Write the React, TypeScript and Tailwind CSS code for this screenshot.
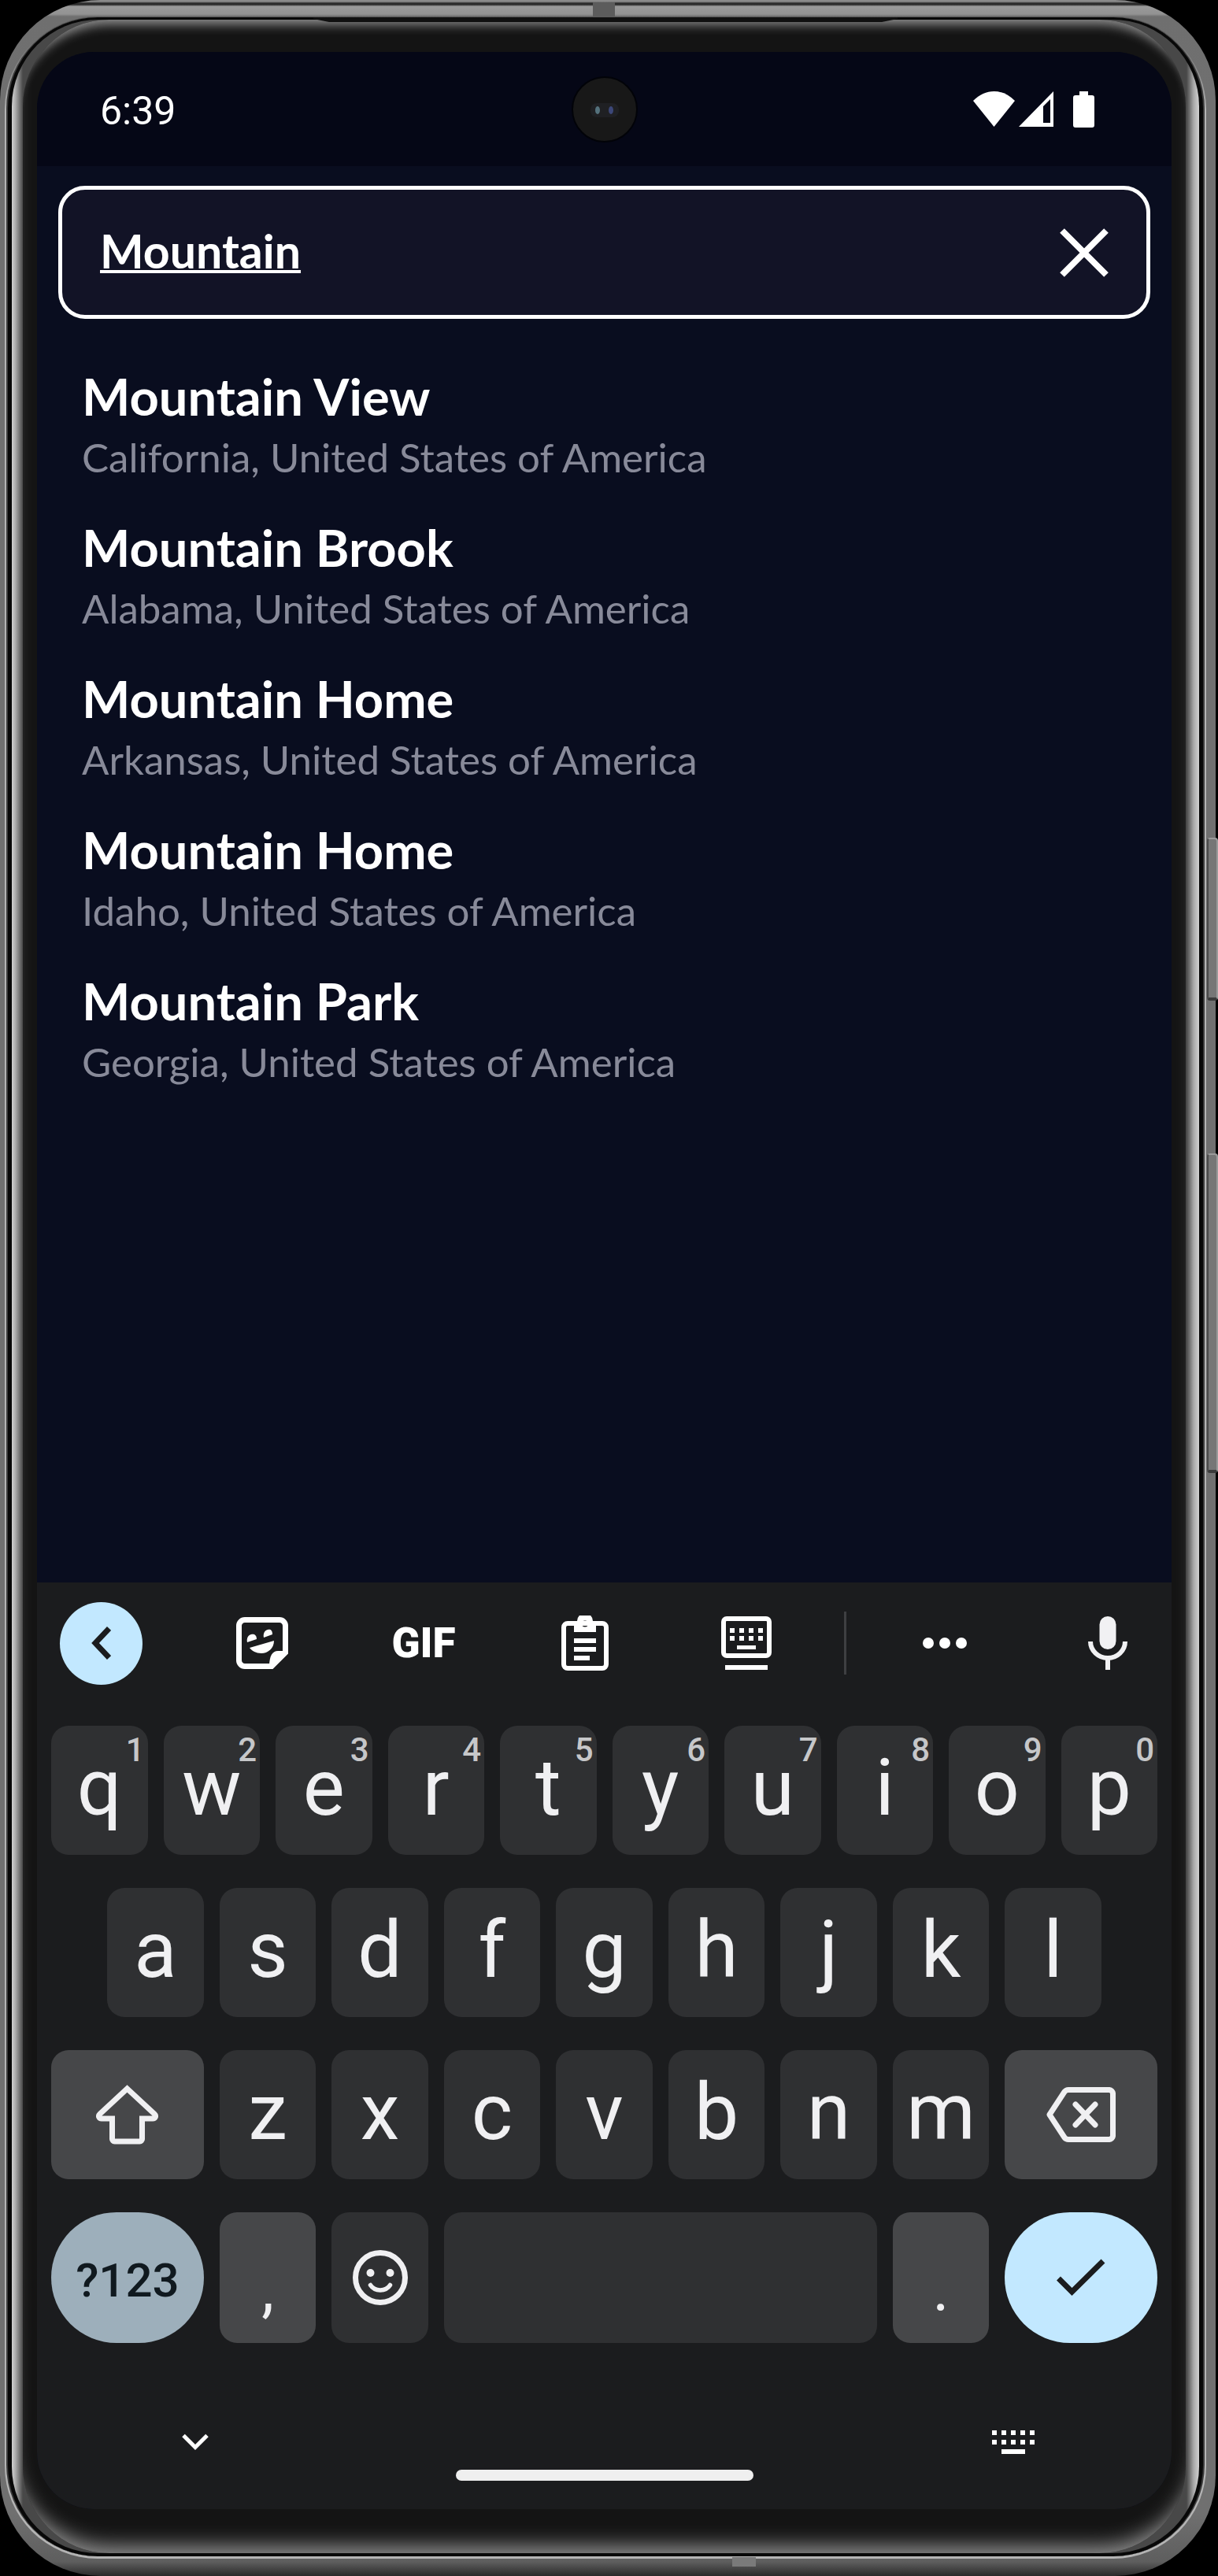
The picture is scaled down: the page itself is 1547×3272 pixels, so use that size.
import { useState } from 'react';
import type { ReactNode } from 'react';

const results = [
  { name: 'Mountain View', region: 'California, United States of America' },
  { name: 'Mountain Brook', region: 'Alabama, United States of America' },
  { name: 'Mountain Home', region: 'Arkansas, United States of America' },
  { name: 'Mountain Home', region: 'Idaho, United States of America' },
  { name: 'Mountain Park', region: 'Georgia, United States of America' },
];

const topRow = ['q', 'w', 'e', 'r', 't', 'y', 'u', 'i', 'o', 'p'];
const middleRow = ['a', 's', 'd', 'f', 'g', 'h', 'j', 'k', 'l'];
const bottomRow = ['z', 'x', 'c', 'v', 'b', 'n', 'm'];

function StatusBar() {
  return (
    <header className="relative flex h-[145px] items-center justify-between bg-[#050716] pr-[98px] pl-20">
      <time className="pt-1 text-[50px] leading-none text-white">6:39</time>
      <Camera />
      <div className="flex items-center text-white">
        <svg width="53" height="45" viewBox="0 0 53 45" fill="currentColor" aria-label="Wi-Fi">
          <path d="M0 12 C8 4 17 0 26.500 0 C36 0 45 4 53 12 L26.500 45 Z" />
        </svg>
        <svg className="ml-[5px]" width="44" height="45" viewBox="0 0 44 45" fill="currentColor" aria-label="Signal">
          <path fillRule="evenodd" d="M0 45 L44 0 V45 Z M31 19 V40 H40 V10 Z" />
        </svg>
        <svg className="ml-[25px]" width="27" height="46" viewBox="0 0 27 46" fill="currentColor" aria-label="Battery">
          <path d="M8 0 H19 V5 H24 a3 3 0 0 1 3 3 V43 a3 3 0 0 1 -3 3 H3 a3 3 0 0 1 -3 -3 V8 a3 3 0 0 1 3 -3 H8 Z" />
        </svg>
      </div>
    </header>
  );
}

function Camera() {
  return (
    <svg
      className="absolute top-1/2 left-1/2 -translate-x-1/2 -translate-y-1/2"
      width="84"
      height="84"
      viewBox="0 0 84 84"
      aria-hidden="true"
    >
      <circle cx="42" cy="42" r="41" fill="#181818" stroke="#020308" strokeWidth="2" />
      <rect x="24" y="34" width="36" height="18" rx="8" fill="#1f2023" />
      <ellipse cx="33" cy="43" rx="3" ry="5" fill="#54717c" />
      <ellipse cx="50" cy="43" rx="3" ry="5" fill="#3c4778" />
    </svg>
  );
}

function SearchBox() {
  const [query, setQuery] = useState('Mountain');
  return (
    <div className="mx-[27px] mt-[25px] flex h-[169px] items-center rounded-[34px] border-[5px] border-white bg-[#121326] pr-12 pl-12">
      <input
        aria-label="Search city"
        className="min-w-0 flex-1 bg-transparent pb-1 font-['Lato',sans-serif] text-[59px] leading-[76px] font-bold text-white underline decoration-4 underline-offset-2 outline-none [text-decoration-skip-ink:none]"
        value={query}
        onChange={(e) => setQuery(e.target.value)}
      />
      <button type="button" aria-label="Clear" className="text-white" onClick={() => setQuery('')}>
        <svg width="62" height="62" viewBox="0 0 62 62" fill="none" stroke="currentColor" strokeWidth="8">
          <path d="M3 3 L59 59 M59 3 L3 59" />
        </svg>
      </button>
    </div>
  );
}

function Results() {
  return (
    <ul className="mt-14 flex flex-1 flex-col gap-9 px-[57px] font-['Lato',sans-serif]">
      {results.map((r, i) => (
        <li key={i}>
          <a href="#" className="block">
            <div className="text-[65px] leading-[84px] font-bold text-white">{r.name}</div>
            <div className="text-[51px] leading-[72px] text-[#888a99]">{r.region}</div>
          </a>
        </li>
      ))}
    </ul>
  );
}

function ToolButton({ label, children }: { label: string; children: ReactNode }) {
  return (
    <button type="button" aria-label={label} className="flex h-[105px] w-[105px] items-center justify-center text-white">
      {children}
    </button>
  );
}

function Toolbar() {
  return (
    <div className="flex h-[154px] items-center px-[29px]">
      <div className="flex flex-1 justify-between">
        <button
          type="button"
          aria-label="Close toolbar"
          className="flex h-[105px] w-[105px] items-center justify-center rounded-full bg-[#c2e8ff] text-[#1b1c1e]"
        >
          <svg width="25" height="42" viewBox="0 0 25 42" fill="none" stroke="currentColor" strokeWidth="7">
            <path d="M22.500 2.500 L5 21 L22.500 39.500" />
          </svg>
        </button>
        <ToolButton label="Stickers">
          <svg width="66" height="66" viewBox="0 0 66 66" fill="currentColor">
            <path
              d="M11 3.500 H55 a7.500 7.500 0 0 1 7.500 7.500 V45 L45 62.500 H11 a7.500 7.500 0 0 1 -7.500 -7.500 V11 a7.500 7.500 0 0 1 7.500 -7.500 Z"
              fill="none"
              stroke="currentColor"
              strokeWidth="7"
            />
            <path d="M42 63 C42 49 46 43 53 43 H65 V46 L46 65 Z" />
            <path d="M14 32 L26 28 C26 22 22 21 19 22 C15 23 13 27 14 32 Z" />
            <path d="M35 26 L46 22 C46 16 43 15 40 16 C36 17 34 21 35 26 Z" />
            <path d="M17 39 L48 30 C48 40 40 46 32 46 C25 46 20 43 17 39 Z" />
          </svg>
        </ToolButton>
        <button type="button" className="flex h-[105px] w-[105px] items-center justify-center text-[53px] leading-none font-black text-white">
          GIF
        </button>
        <ToolButton label="Clipboard">
          <svg width="60" height="70" viewBox="0 0 60 70" fill="currentColor">
            <rect x="3" y="10" width="54" height="57" rx="5" fill="none" stroke="currentColor" strokeWidth="6" />
            <path
              fillRule="evenodd"
              d="M16 7 H20 a10 10 0 0 1 20 0 H44 V21 H16 Z M30 6.500 a4 4 0 1 0 0 8 a4 4 0 1 0 0 -8 Z"
            />
            <path d="M16 29 H44 V35 H16 Z M16 40 H44 V46 H16 Z M16 51 H36 V57 H16 Z" />
          </svg>
        </ToolButton>
        <ToolButton label="Floating keyboard">
          <svg width="64" height="68" viewBox="0 0 64 68" fill="currentColor">
            <rect x="3" y="3" width="58" height="47" rx="4" fill="none" stroke="currentColor" strokeWidth="6" />
            <path d="M11 15h6v6h-6z M23 15h6v6h-6z M35 15h6v6h-6z M47 15h6v6h-6z M11 25h6v6h-6z M23 25h6v6h-6z M35 25h6v6h-6z M47 25h6v6h-6z M20 37h24v5h-24z M5 62h54v6h-54z" />
          </svg>
        </ToolButton>
      </div>
      <div className="mx-[72px] h-20 w-[3px] bg-[#3e3f42]" />
      <div className="flex w-[312px] justify-between">
        <ToolButton label="More">
          <svg width="56" height="14" viewBox="0 0 56 14" fill="currentColor">
            <circle cx="7" cy="7" r="7" />
            <circle cx="28" cy="7" r="7" />
            <circle cx="49" cy="7" r="7" />
          </svg>
        </ToolButton>
        <ToolButton label="Voice input">
          <svg width="50" height="68" viewBox="0 0 50 68" fill="none" stroke="#f1f1f3" strokeWidth="6">
            <rect x="14.500" y="0" width="21" height="42" rx="10.500" fill="#f1f1f3" stroke="none" />
            <path d="M3 32 a22 21 0 0 0 44 0 M25 53 V68" />
          </svg>
        </ToolButton>
      </div>
    </div>
  );
}

function Letter({ letter, hint, first }: { letter: string; hint?: string; first?: boolean }) {
  return (
    <button
      type="button"
      className={
        'relative col-span-2 flex h-[164px] items-center justify-center rounded-[22px] bg-[#2f3032] pb-1.5 text-[100px] leading-[158px] text-[#f0f0f2]' +
        (first ? ' col-start-2' : '')
      }
    >
      {letter}
      {hint && <span className="absolute top-2.5 right-1 text-[42px] leading-[42px] font-medium text-[#c6c7c9]">{hint}</span>}
    </button>
  );
}

function Keyboard() {
  return (
    <section aria-label="Keyboard" className="bg-[#1b1c1e]">
      <Toolbar />
      <div className="mt-7 flex flex-col gap-[42px] px-[18px]">
        <div className="grid grid-cols-20 gap-x-5">
          {topRow.map((l, i) => (
            <Letter key={l} letter={l} hint={String((i + 1) % 10)} />
          ))}
        </div>
        <div className="grid grid-cols-20 gap-x-5">
          {middleRow.map((l, i) => (
            <Letter key={l} letter={l} first={i === 0} />
          ))}
        </div>
        <div className="grid grid-cols-20 gap-x-5">
          <button type="button" aria-label="Shift" className="col-span-3 flex items-center justify-center rounded-[22px] bg-[#464749]">
            <svg width="79" height="76" viewBox="0 0 79 76" fill="none" stroke="#f0f0f2" strokeWidth="7">
              <path d="M39.500 5 L74 37 C77 40 75 43 72 43 H58.500 V69 a3 3 0 0 1 -3 3 H23.500 a3 3 0 0 1 -3 -3 V43 H7 C4 43 2 40 5 37 Z" />
            </svg>
          </button>
          {bottomRow.map((l) => (
            <Letter key={l} letter={l} />
          ))}
          <button type="button" aria-label="Backspace" className="col-span-3 flex items-center justify-center rounded-[22px] bg-[#464749]">
            <svg width="88" height="70" viewBox="0 0 88 70" fill="none" stroke="#f0f0f2" strokeWidth="7" strokeLinejoin="round">
              <path d="M28 3.500 H79 a5 5 0 0 1 5.500 5.500 V61 a5 5 0 0 1 -5.500 5.500 H28 Q25 66.500 23 64 L4 35 L23 6 Q25 3.500 28 3.500 Z" />
              <path d="M37 22 L62 48 M62 22 L37 48" strokeLinecap="round" />
            </svg>
          </button>
        </div>
        <div className="grid h-[166px] grid-cols-20 gap-x-5">
          <button
            type="button"
            className="col-span-3 rounded-full bg-[#9dafbb] pt-2 text-[60px] leading-none font-medium text-[#10191f]"
          >
            ?123
          </button>
          <button type="button" className="col-span-2 flex items-end justify-center rounded-[22px] bg-[#464749] pb-7 text-[80px] leading-[80px] text-[#f0f0f2]">
            ,
          </button>
          <button type="button" aria-label="Emoji" className="col-span-2 flex items-center justify-center rounded-[22px] bg-[#2f3032]">
            <svg width="70" height="70" viewBox="0 0 70 70" fill="none" stroke="#f0f0f2" strokeWidth="7">
              <circle cx="35" cy="35" r="31.500" />
              <circle cx="22.500" cy="29" r="5" fill="#f0f0f2" stroke="none" />
              <circle cx="47.500" cy="29" r="5" fill="#f0f0f2" stroke="none" />
              <path d="M22.500 44.500 C28 53 42 53 47.500 44.500" strokeWidth="5.500" strokeLinecap="round" />
            </svg>
          </button>
          <button type="button" aria-label="Space" className="col-span-8 rounded-[22px] bg-[#2f3032]" />
          <button type="button" className="col-span-2 flex items-end justify-center rounded-[22px] bg-[#464749] pb-7 text-[80px] leading-[80px] text-[#f0f0f2]">
            .
          </button>
          <button type="button" aria-label="Done" className="col-span-3 flex items-center justify-center rounded-full bg-[#c2e8ff]">
            <svg width="62" height="48" viewBox="0 0 62 48" fill="none" stroke="#1b1c1e" strokeWidth="7">
              <path d="M2.500 25 L19.500 42 L59 3" />
            </svg>
          </button>
        </div>
      </div>
      <nav className="mt-24 pb-9">
        <div className="flex h-[60px] items-center justify-between px-[165px]">
          <button type="button" aria-label="Hide keyboard" className="flex w-[72px] justify-center">
            <svg width="34" height="22" viewBox="0 0 34 22" fill="none" stroke="#ffffff" strokeWidth="5">
              <path d="M2 2.500 L17 17.500 L32 2.500" />
            </svg>
          </button>
          <button type="button" aria-label="Switch keyboard" className="flex w-[72px] justify-center">
            <svg width="54" height="30" viewBox="0 0 54 30" fill="#ffffff">
              <path d="M0 0h6v6h-6z M12 0h6v6h-6z M24 0h6v6h-6z M36 0h6v6h-6z M48 0h6v6h-6z M0 12h6v6h-6z M12 12h6v6h-6z M24 12h6v6h-6z M36 12h6v6h-6z M48 12h6v6h-6z M12 24h30v6h-30z" />
            </svg>
          </button>
        </div>
        <div className="mx-auto mt-[5px] h-3.5 w-[378px] rounded-full bg-[#efefef]" />
      </nav>
    </section>
  );
}

/* Metal rim, black seam and glossy glass edge, nested from the outside in. */
function PhoneFrame({ children }: { children: ReactNode }) {
  return (
    <div className="flex min-h-screen bg-black pr-[3px] font-['Roboto',sans-serif]">
      <div className="relative flex flex-1 rounded-[128px] bg-[linear-gradient(to_bottom,#8a8a8a_0,#8a8a8a_2px,#2b2b2b_4px,#2b2b2b_6px,#9a9a9a_8px,#929292_18px,#6f6f6f_21px,#707070_120px,#707070_calc(100%-80px),#5e5e5e_calc(100%-18px),#2a2a2a_100%)] pt-[21px] pr-3 pb-[22px] pl-1.5">
        <div className="absolute top-[1064px] -right-[3px] h-[207px] w-3.5 rounded-sm border-2 border-[#9a9a9a] border-b-4 border-l-[#4a4a4a] border-b-[#3a3a3a] bg-[#767676]" />
        <div className="absolute top-[1465px] -right-[3px] h-[406px] w-3.5 rounded-sm border-2 border-[#9a9a9a] border-b-4 border-l-[#4a4a4a] border-b-[#3a3a3a] bg-[#767676]" />
        <div className="absolute top-[3px] left-[753px] h-5 w-7 bg-[#5c5c5c]" />
        <div className="absolute bottom-3 left-[930px] h-3 w-[30px] bg-[#7a7a7a]" />
        <div className="flex flex-1 rounded-[118px] bg-[linear-gradient(to_bottom,#555555,#b4b4b4_120px,#b4b4b4)] px-0.5 pt-px pb-[3px]">
          <div className="relative flex flex-1 rounded-[116px] border-x-2 border-[#3c3c3c] bg-[#080808] px-[5px] pt-[3px] pb-[4px]">
            <svg
              className="absolute top-0 left-1/2 -translate-x-1/2"
              width="742"
              height="6"
              viewBox="0 0 742 6"
              preserveAspectRatio="none"
              aria-hidden="true"
            >
              <path d="M0 2 L20 6 H722 L742 2 V0 H0 Z" fill="#101010" />
            </svg>
            <div className="flex flex-1 overflow-hidden rounded-[110px] bg-[linear-gradient(to_right,#d2d2d2_0,#a8a8a8_5px,#484848_14px,#484848_calc(100%-16px),#a8a8a8_calc(100%-7px),#d2d2d2_100%)] pr-[17px] pl-3.5">
              <div className="flex flex-1 rounded-[110px] bg-[#141414] px-[18px] pt-[41px] pb-[56px] shadow-[inset_0_20px_14px_-14px_#909090,inset_0_-24px_24px_-14px_#8a8a8a]">
                {children}
              </div>
            </div>
          </div>
        </div>
      </div>
    </div>
  );
}

export default function App() {
  return (
    <PhoneFrame>
      <main className="flex min-w-0 flex-1 flex-col overflow-hidden rounded-[72px] bg-[#090d1f]">
        <StatusBar />
        <SearchBox />
        <Results />
        <Keyboard />
      </main>
    </PhoneFrame>
  );
}
